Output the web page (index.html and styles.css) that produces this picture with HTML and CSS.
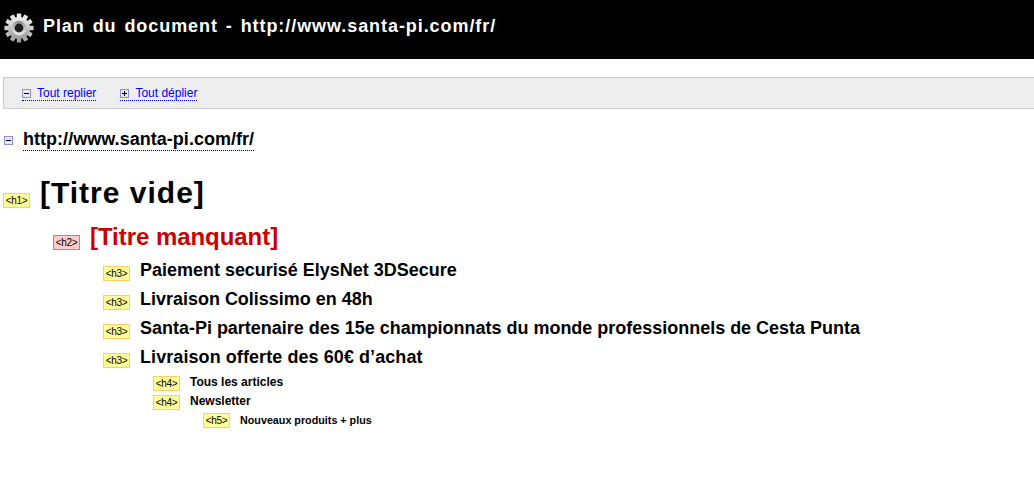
FILE: index.html
```html
<!DOCTYPE html>
<html lang="fr">
<head>
<meta charset="utf-8">
<title>Plan du document</title>
<link rel="stylesheet" href="styles.css">
</head>
<body>
<header class="head">
  <svg class="gear" width="32" height="32" viewBox="0 0 32 32">
    <defs>
      <linearGradient id="g" x1="0" y1="0" x2="0" y2="1"><stop offset="0" stop-color="#efefef"/><stop offset="1" stop-color="#9a9a9a"/></linearGradient>
      <linearGradient id="h" x1="0" y1="0" x2="0" y2="1"><stop offset="0" stop-color="#8f8f8f"/><stop offset="1" stop-color="#f2f2f2"/></linearGradient>
    </defs>
    <g fill="#c8c8c8">
      <rect x="13.8" y="1.4" width="4.4" height="6" rx="0.8" fill="#eee"/>
      <rect x="13.8" y="1.4" width="4.4" height="6" rx="0.8" fill="#e6e6e6" transform="rotate(30 16 16)"/>
      <rect x="13.8" y="1.4" width="4.4" height="6" rx="0.8" fill="#dcdcdc" transform="rotate(60 16 16)"/>
      <rect x="13.8" y="1.4" width="4.4" height="6" rx="0.8" fill="#d0d0d0" transform="rotate(90 16 16)"/>
      <rect x="13.8" y="1.4" width="4.4" height="6" rx="0.8" fill="#bdbdbd" transform="rotate(120 16 16)"/>
      <rect x="13.8" y="1.4" width="4.4" height="6" rx="0.8" fill="#aaa" transform="rotate(150 16 16)"/>
      <rect x="13.8" y="1.4" width="4.4" height="6" rx="0.8" fill="#a0a0a0" transform="rotate(180 16 16)"/>
      <rect x="13.8" y="1.4" width="4.4" height="6" rx="0.8" fill="#aaa" transform="rotate(210 16 16)"/>
      <rect x="13.8" y="1.4" width="4.4" height="6" rx="0.8" fill="#bdbdbd" transform="rotate(240 16 16)"/>
      <rect x="13.8" y="1.4" width="4.4" height="6" rx="0.8" fill="#d0d0d0" transform="rotate(270 16 16)"/>
      <rect x="13.8" y="1.4" width="4.4" height="6" rx="0.8" fill="#dcdcdc" transform="rotate(300 16 16)"/>
      <rect x="13.8" y="1.4" width="4.4" height="6" rx="0.8" fill="#e6e6e6" transform="rotate(330 16 16)"/>
    </g>
    <circle cx="16" cy="16" r="11" fill="url(#g)"/>
    <circle cx="16" cy="16" r="7.2" fill="url(#h)"/>
    <circle cx="16" cy="16" r="4.4" fill="#1c1c1c"/>
  </svg>
  <h1 class="title">Plan du document - http://www.santa-pi.com/fr/</h1>
</header>
<nav class="bar">
  <a class="tool" href="#"><span class="box minus"></span>Tout replier</a>
  <a class="tool" href="#"><span class="box plus"></span>Tout déplier</a>
</nav>
<div class="root"><span class="box minus"></span><a class="url" href="#">http://www.santa-pi.com/fr/</a></div>
<ul class="tree">
  <li class="row r1"><span class="tag">&lt;h1&gt;</span><span class="t">[Titre vide]</span></li>
  <li class="row r2"><span class="tag bad">&lt;h2&gt;</span><span class="t">[Titre manquant]</span></li>
  <li class="row r3"><span class="tag">&lt;h3&gt;</span><span class="t">Paiement securisé ElysNet 3DSecure</span></li>
  <li class="row r3"><span class="tag">&lt;h3&gt;</span><span class="t">Livraison Colissimo en 48h</span></li>
  <li class="row r3"><span class="tag">&lt;h3&gt;</span><span class="t">Santa-Pi partenaire des 15e championnats du monde professionnels de Cesta Punta</span></li>
  <li class="row r3"><span class="tag">&lt;h3&gt;</span><span class="t wide">Livraison offerte des 60€ d’achat</span></li>
  <li class="row r4"><span class="tag">&lt;h4&gt;</span><span class="t">Tous les articles</span></li>
  <li class="row r4"><span class="tag">&lt;h4&gt;</span><span class="t">Newsletter</span></li>
  <li class="row r5"><span class="tag">&lt;h5&gt;</span><span class="t">Nouveaux produits + plus</span></li>
</ul>
</body>
</html>
```
FILE: styles.css
```css
* { box-sizing: border-box; }
html, body { margin: 0; padding: 0; }
body { background: #fff; font-family: "Liberation Sans", Arial, sans-serif; color: #000; overflow: hidden; height: 483px; }
.head { background: #000; height: 59px; padding: 12px 0 0 3px; display: flex; align-items: flex-start; gap: 8px; }
.gear { flex: none; }
.title { margin: 4px 0 0; color: #fff; font-size: 18px; line-height: 20px; font-weight: bold; word-spacing: 2px; letter-spacing: 0.93px; }
.bar { margin: 18px 0 0 3px; height: 32px; background: #eee; border: 1px solid #ccc; border-right: 0; padding: 0 0 0 18px; display: flex; align-items: center; gap: 24px; font-size: 12px; }
.tool { color: #00f; text-decoration: none; border-bottom: 1px dotted #00f; line-height: 14px; display: flex; align-items: center; }
.box { display: inline-block; width: 9px; height: 9px; border: 1px solid #8f8fd8; background: #e8e8e8; position: relative; flex: none; }
.box::before { content: ""; position: absolute; left: 1px; right: 1px; top: 3px; height: 1px; background: #000; }
.plus::after { content: ""; position: absolute; top: 1px; bottom: 1px; left: 3px; width: 1px; background: #000; }
.tool .box { margin: 1px 6px 0 0; }
.root { display: flex; align-items: center; margin: 20px 0 0 4px; height: 22px; }
.root .box { margin: 0 10px 0 0; }
.url { color: #000; text-decoration: none; font-size: 18px; font-weight: bold; line-height: 21px; border-bottom: 1px dotted #000; letter-spacing: 0.03px; }
.tree { list-style: none; margin: 20px 0 0; padding: 0; }
.row { display: flex; align-items: center; font-weight: bold; }
.tag { flex: none; width: 27px; height: 15px; background: #ff9; border: 1px solid #fc6; font-size: 10px; letter-spacing: -0.35px; font-weight: normal; line-height: 13px; text-align: center; margin-right: 10px; position: relative; top: 3px; color: #000; }
.bad { background: #fcc; border-color: #f66; }
.r1 { padding-left: 3px; height: 44px; font-size: 30px; letter-spacing: 1px; }
.r1 .tag { top: 7px; letter-spacing: -0.35px; }
.r2 { padding: 3px 0 0 53px; height: 41px; font-size: 24px; color: #c00; letter-spacing: -0.05px; }
.r2 .tag { top: 5px; letter-spacing: -0.35px; }
.r3 { padding-left: 103px; height: 29px; font-size: 17.98px; }
.wide { letter-spacing: 0.09px; }
.r4 { padding-left: 153px; height: 19px; font-size: 12px; }
.r5 { padding-left: 203px; height: 19px; font-size: 10.75px; }
.r4 .tag { top: 2px; }
.r5 .tag { top: 1px; }
```
